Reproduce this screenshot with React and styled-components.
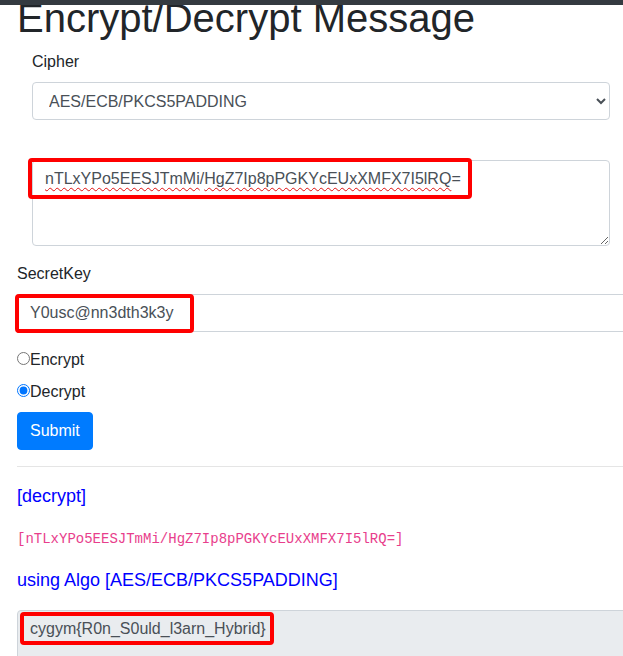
import React from 'react';
import styled, { createGlobalStyle } from 'styled-components';

const GlobalStyle = createGlobalStyle`
  *, *::before, *::after { box-sizing: border-box; }
  html, body { margin: 0; padding: 0; overflow: hidden; background: #fff; }
  body {
    font-family: "Liberation Sans", Arial, sans-serif;
    font-size: 16px;
    line-height: 1.5;
    color: #212529;
  }
`;

const TopBar = styled.div`
  position: fixed;
  top: 0;
  left: 0;
  right: 0;
  height: 5px;
  background: #343a40;
  z-index: 10;
`;

const Page = styled.main`
  width: 760px;
  padding: 0 17px;
`;

const Title = styled.h1`
  margin: -6px 0 8px 0;
  font-size: 40px;
  line-height: 1.2;
  font-weight: 400;
  color: #212529;
`;

const CipherGroup = styled.div`
  width: 578px;
  margin-left: 15px;
`;

const Label = styled.label`
  display: block;
  margin-bottom: 8px;
  color: #212529;
`;

const Select = styled.select`
  display: block;
  width: 100%;
  height: 38px;
  padding: 6px 12px;
  font-family: "Liberation Sans", Arial, sans-serif;
  font-size: 16px;
  line-height: 1.5;
  color: #495057;
  background: #fff;
  border: 1px solid #ced4da;
  border-radius: 4px;
`;

const FieldWrap = styled.div`
  position: relative;
  margin-top: ${p => p.$mt || 0}px;
`;

const MessageBox = styled.div`
  height: 86px;
  padding: 6px 12px;
  border: 1px solid #ced4da;
  border-radius: 4px;
  background: #fff;
  color: #495057;
  overflow: auto;
  resize: vertical;
  white-space: nowrap;
`;

const Misspelled = styled.span`
  text-decoration: underline wavy #e01010;
  text-decoration-thickness: 1px;
  text-underline-offset: 3px;
`;

const Highlight = styled.div`
  position: absolute;
  left: ${p => p.$left}px;
  top: ${p => p.$top}px;
  width: ${p => p.$w}px;
  height: ${p => p.$h}px;
  border: 4px solid #ff0000;
  border-radius: 4px;
  pointer-events: none;
`;

const KeyGroup = styled.div`
  margin-top: 16px;
`;

const TextInput = styled.input`
  display: block;
  width: 100%;
  height: 38px;
  padding: 6px 12px;
  font-family: "Liberation Sans", Arial, sans-serif;
  font-size: 16px;
  line-height: 1.5;
  color: #495057;
  background: #fff;
  border: 1px solid #ced4da;
  border-radius: 4px;
  outline: none;
`;

const RadioGroup = styled.div`
  display: flex;
  flex-direction: column;
  gap: 8px;
  margin-top: 16px;
`;

const RadioRow = styled.label`
  display: block;
  height: 24px;
  line-height: 24px;
`;

const Radio = styled.input`
  margin: 0;
  width: 13px;
  height: 13px;
`;

const SubmitButton = styled.button`
  display: inline-block;
  margin-top: 8px;
  height: 38px;
  padding: 6px 12px;
  font-family: "Liberation Sans", Arial, sans-serif;
  font-size: 16px;
  line-height: 1.5;
  color: #fff;
  background: #007bff;
  border: 1px solid #007bff;
  border-radius: 4px;
`;

const Divider = styled.hr`
  margin: 16px 0;
  border: 0;
  border-top: 1px solid rgba(0, 0, 0, 0.1);
`;

const InfoLine = styled.p`
  margin: 0 0 16px;
  font-size: 18px;
  line-height: 27px;
  color: #0000ff;
`;

const CodeLine = styled.p`
  margin: 0 0 16px;
  line-height: 24px;
`;

const Code = styled.code`
  font-family: "Liberation Mono", "Courier New", monospace;
  font-size: 14px;
  color: #e83e8c;
`;

const ResultBox = styled.textarea`
  display: block;
  width: 100%;
  height: 86px;
  padding: 6px 12px;
  font-family: "Liberation Sans", Arial, sans-serif;
  font-size: 16px;
  line-height: 1.5;
  color: #495057;
  background: #e9ecef;
  border: 1px solid #ced4da;
  border-radius: 4px;
  resize: none;
  outline: none;
`;

export default function App() {
  const cipherText = 'nTLxYPo5EESJTmMi/HgZ7Ip8pPGKYcEUxXMFX7I5lRQ=';
  return (
    <>
      <GlobalStyle />
      <TopBar />
      <Page>
        <Title>Encrypt/Decrypt Message</Title>
        <CipherGroup>
          <Label>Cipher</Label>
          <Select defaultValue="AES/ECB/PKCS5PADDING">
            <option>AES/ECB/PKCS5PADDING</option>
          </Select>
          <FieldWrap $mt={40}>
            <MessageBox>
              <Misspelled>nTLxYPo5EESJTmMi</Misspelled>/<Misspelled>HgZ7Ip8pPGKYcEUxXMFX7I5lRQ</Misspelled>=
            </MessageBox>
            <Highlight $left={-4} $top={-2} $w={444} $h={41} />
          </FieldWrap>
        </CipherGroup>
        <KeyGroup>
          <Label>SecretKey</Label>
          <FieldWrap>
            <TextInput type="text" defaultValue="Y0usc@nn3dth3k3y" readOnly />
            <Highlight $left={-2} $top={0} $w={179} $h={39} />
          </FieldWrap>
        </KeyGroup>
        <RadioGroup>
          <RadioRow>
            <Radio type="radio" name="mode" />Encrypt
          </RadioRow>
          <RadioRow>
            <Radio type="radio" name="mode" defaultChecked />Decrypt
          </RadioRow>
        </RadioGroup>
        <SubmitButton type="button">Submit</SubmitButton>
        <Divider />
        <InfoLine>[decrypt]</InfoLine>
        <CodeLine>
          <Code>[{cipherText}]</Code>
        </CodeLine>
        <InfoLine>using Algo [AES/ECB/PKCS5PADDING]</InfoLine>
        <FieldWrap>
          <ResultBox readOnly value="cygym{R0n_S0uld_l3arn_Hybrid}" />
          <Highlight $left={3} $top={2} $w={254} $h={33} />
        </FieldWrap>
      </Page>
    </>
  );
}
